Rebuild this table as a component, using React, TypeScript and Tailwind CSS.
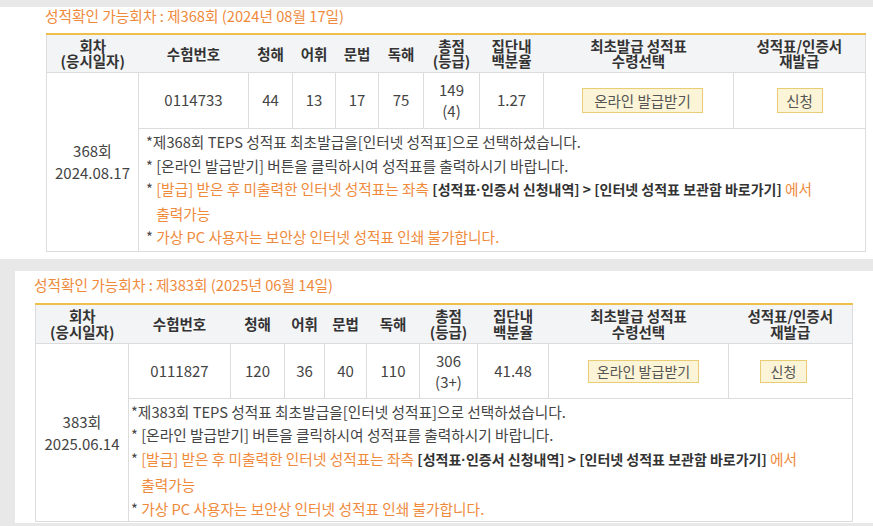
const FONT = "font-['Noto_Sans_CJK_KR','Noto_Sans',sans-serif]";

type Props = {
  round: string;
  date: string;
  dateDots: string;
  id: string;
  scores: string[];
  total: string;
  grade: string;
  pct: string;
  cols: number[];
  headH: number;
  dataH: number;
  noteClass: string;
  btnClass: string;
  smallBtnClass: string;
};

function ScoreTable(p: Props) {
  const th = "border-b border-[#dcdcdc] font-bold text-[#333] text-[14.5px] leading-[15.5px] text-center align-middle";
  const td = "border border-[#dcdcdc] text-center align-middle text-[15px] text-[#444]";
  return (
    <table className="table-fixed border-collapse border-x border-b border-[#dcdcdc]">
      <colgroup>
        {p.cols.map((w, i) => (
          <col key={i} style={{ width: w }} />
        ))}
      </colgroup>
      <thead>
        <tr className="bg-[#f3f4f6] border-t-2 border-t-[#efbf4c]" style={{ height: p.headH }}>
          <th className={th}>
            회차
            <br />
            (응시일자)
          </th>
          <th className={th}>수험번호</th>
          <th className={th}>청해</th>
          <th className={th}>어휘</th>
          <th className={th}>문법</th>
          <th className={th}>독해</th>
          <th className={th}>
            총점
            <br />
            (등급)
          </th>
          <th className={th}>
            집단내
            <br />
            백분율
          </th>
          <th className={th}>
            최초발급 성적표
            <br />
            수령선택
          </th>
          <th className={th}>
            성적표/인증서
            <br />
            재발급
          </th>
        </tr>
      </thead>
      <tbody>
        <tr style={{ height: p.dataH }}>
          <td rowSpan={2} className={td + " leading-[22px]"}>
            {p.round}
            <br />
            {p.dateDots}
          </td>
          <td className={td}>{p.id}</td>
          {p.scores.map((s, i) => (
            <td key={i} className={td}>
              {s}
            </td>
          ))}
          <td className={td + " leading-[21px]"}>
            {p.total}
            <br />
            {p.grade}
          </td>
          <td className={td}>{p.pct}</td>
          <td className={td}>
            <button className={"bg-[#fcf4d6] border border-[#e8cd74] text-[#555] " + p.btnClass}>
              온라인 발급받기
            </button>
          </td>
          <td className={td}>
            <button className={"bg-[#fcf4d6] border border-[#e8cd74] text-[#555] " + p.smallBtnClass}>
              신청
            </button>
          </td>
        </tr>
        <tr className="h-[123px]">
          <td colSpan={9} className={"border border-[#dcdcdc] text-left align-middle text-[14.7px] text-[#444] " + p.noteClass}>
            <p className="whitespace-nowrap">
              *제{p.date}회 TEPS 성적표 최초발급을[인터넷 성적표]으로 선택하셨습니다.
            </p>
            <p className="whitespace-nowrap">* [온라인 발급받기] 버튼을 클릭하시여 성적표를 출력하시기 바랍니다.</p>
            <div className="flex">
              <span className="shrink-0">*&nbsp;</span>
              <span className="text-[#ef8a3c] whitespace-nowrap">
                [발급] 받은 후 미출력한 인터넷 성적표는 좌측{" "}
                <b className="text-[#333] font-bold text-[14px]">
                  [성적표<span className="font-['Liberation_Sans',sans-serif]">·</span>인증서 신청내역] &gt; [인터넷 성적표 보관함 바로가기]
                </b>{" "}
                에서
                <br />
                출력가능
              </span>
            </div>
            <p className="whitespace-nowrap">
              * <span className="text-[#ef8a3c]">가상 PC 사용자는 보안상 인터넷 성적표 인쇄 불가합니다.</span>
            </p>
          </td>
        </tr>
      </tbody>
    </table>
  );
}

export default function App() {
  return (
    <div className={"bg-[#e8e8e8] h-[526px] w-[873px] overflow-hidden pt-[7px] " + FONT}>
      <section className="bg-white pl-[46px] pb-[7px]">
        <h2 className="h-[26px] text-[14.7px] leading-[18px] text-[#ef8a3c] -ml-px">
          성적확인 가능회차 : 제368회 (2024년 08월 17일)
        </h2>
        <ScoreTable
          round="368회"
          date="368"
          dateDots="2024.08.17"
          id="0114733"
          scores={["44", "13", "17", "75"]}
          total="149"
          grade="(4)"
          pct="1.27"
          cols={[92, 110, 44, 43, 43, 45, 56, 64, 190, 132]}
          headH={38}
          dataH={56}
          noteClass="pl-[7px] leading-[23.25px]"
          btnClass="w-[121px] h-[25px] text-[14.5px] leading-[23px] ml-[8px]"
          smallBtnClass="w-[46px] h-[25px] text-[14.5px] leading-[23px]"
        />
      </section>
      <section className="bg-white ml-[15px] mt-[12px] pl-[20px] pt-[5px] h-[252px]">
        <h2 className="h-[18px] mb-[9px] text-[14.7px] leading-[18px] text-[#ef8a3c] -ml-px">
          성적확인 가능회차 : 제383회 (2025년 06월 14일)
        </h2>
        <ScoreTable
          round="383회"
          date="383"
          dateDots="2025.06.14"
          id="0111827"
          scores={["120", "36", "40", "110"]}
          total="306"
          grade="(3+)"
          pct="41.48"
          cols={[93, 102, 54, 40, 42, 53, 58, 71, 180, 124]}
          headH={40}
          dataH={55}
          noteClass="pl-[2px] leading-[23.75px]"
          btnClass="w-[111px] h-[23px] text-[14px] leading-[21px] ml-[10px]"
          smallBtnClass="w-[47px] h-[23px] text-[14px] leading-[21px] -ml-[14px]"
        />
      </section>
    </div>
  );
}
